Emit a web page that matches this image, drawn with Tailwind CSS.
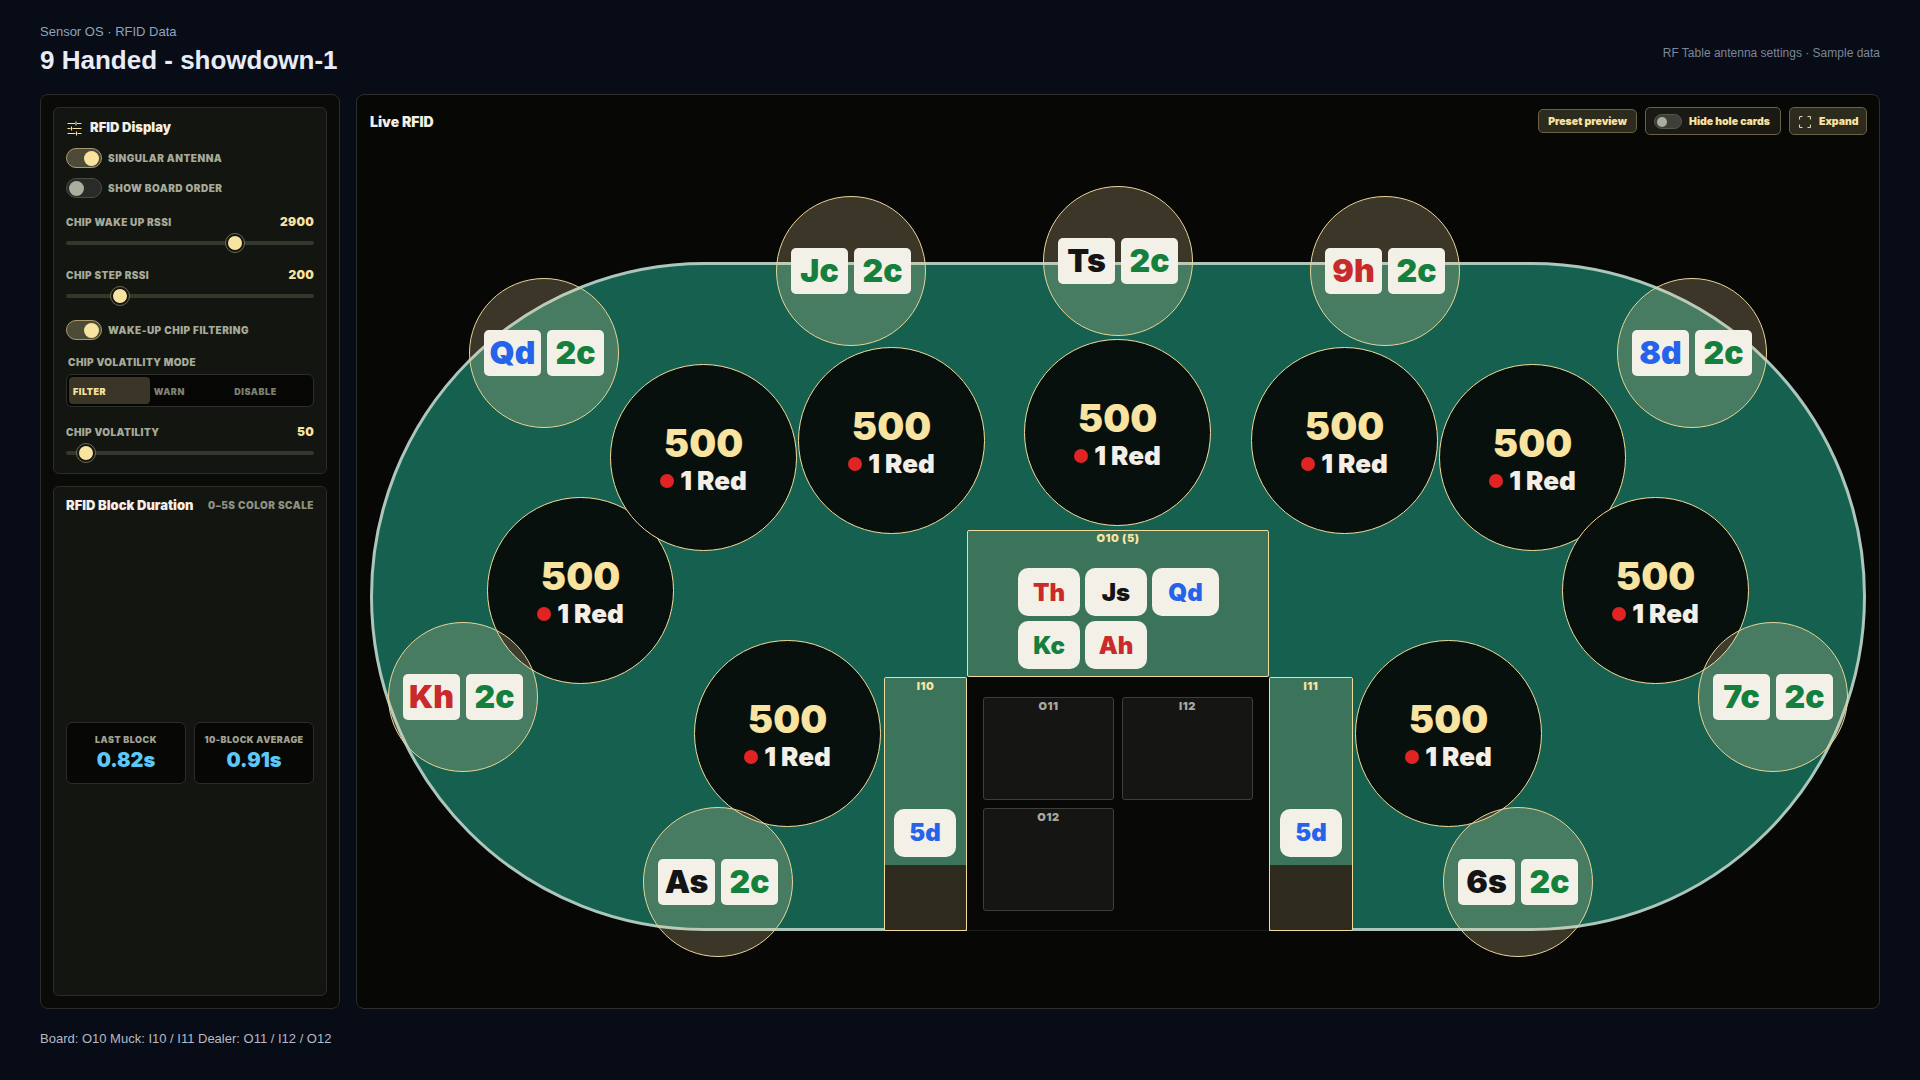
<!doctype html>
<html lang="en"><head><meta charset="utf-8"><title>RFID</title>
<script src="https://cdn.jsdelivr.net/npm/@tailwindcss/browser@4"></script></head>
<body class="bg-[#080c16] font-['Liberation_Sans',sans-serif] overflow-hidden">
<div class="w-[1920px] h-[1080px] flex flex-col px-[40px]">
  <header class="h-[94px] flex justify-between items-start">
    <div class="pt-[24px]">
      <div class="text-[13px] leading-[16px] text-[#8fa3bd]">Sensor OS · RFID Data</div>
      <h1 class="mt-[5px] text-[26px] leading-[30px] font-bold text-[#e8ecf6]">9 Handed - showdown-1</h1>
    </div>
    <div class="mt-[46px] text-[12px] leading-[14px] text-[#7b8698]">RF Table antenna settings · Sample data</div>
  </header>
  <main class="flex gap-[16px] h-[915px] font-['Inter',sans-serif]">
    <aside class="w-[300px] bg-[#0a0a08] border border-[#2c2b24] rounded-[8px] p-[12px] flex flex-col gap-[12px]">
      <section class="h-[367px] bg-[#131510] border border-[#2c2d25] rounded-[6px] px-[12px] pt-[11px]">
        <div class="flex items-center gap-[8px] h-[18px] pl-[1px]">
          <svg class="w-[15px] h-[15px] text-[#f8e3a1]" viewBox="0 0 15 15" fill="none" stroke="currentColor" stroke-width="1.1"><path d="M0.5 2.5H8M10 2.5H14.5M9 0.5V4.5M0.5 7.5H3.5M5.5 7.5H14.5M4.5 5.5V9.5M0.5 12.5H8.5M10.5 12.5H14.5M9.5 10.5V14.5"/></svg>
          <span class="text-[13px] font-black text-[#f3efe6]">RFID Display</span>
        </div>
        <div class="mt-[11px] flex items-center gap-[6px] h-[20px]">
          <span class="w-[36px] h-[20px] rounded-full bg-[#4e4a38] border border-[#a9986a] flex items-center justify-end pr-[2px]"><span class="w-[15px] h-[15px] rounded-full bg-[#f8e3a1]"></span></span>
          <span class="text-[10px] font-black tracking-[0.05em] text-[#a6aa99]">SINGULAR ANTENNA</span>
        </div>
        <div class="mt-[10px] flex items-center gap-[6px] h-[20px]">
          <span class="w-[36px] h-[20px] rounded-full bg-[#292b26] border border-[#4a4b45] flex items-center pl-[2px]"><span class="w-[15px] h-[15px] rounded-full bg-[#a9af9d]"></span></span>
          <span class="text-[10px] font-black tracking-[0.05em] text-[#a6aa99]">SHOW BOARD ORDER</span>
        </div>
        <div class="mt-[17px] flex justify-between items-center h-[14px] leading-none">
          <span class="text-[10px] font-black tracking-[0.04em] text-[#a6aa99]">CHIP WAKE UP RSSI</span>
          <span class="text-[12px] font-black tracking-[0.02em] text-[#f8e3a1]">2900</span>
        </div>
        <div class="relative mt-[12px] h-[4px] rounded-full bg-[#34372b]">
          <span class="absolute left-[160px] top-[-7px] w-[18px] h-[18px] rounded-full bg-[#f8e3a1] border-[#131510] border-[2px] outline outline-[#716a4e]"></span>
        </div>
        <div class="mt-[23px] flex justify-between items-center h-[14px] leading-none">
          <span class="text-[10px] font-black tracking-[0.04em] text-[#a6aa99]">CHIP STEP RSSI</span>
          <span class="text-[12px] font-black tracking-[0.02em] text-[#f8e3a1]">200</span>
        </div>
        <div class="relative mt-[12px] h-[4px] rounded-full bg-[#34372b]">
          <span class="absolute left-[45px] top-[-7px] w-[18px] h-[18px] rounded-full bg-[#f8e3a1] border-[#131510] border-[2px] outline outline-[#716a4e]"></span>
        </div>
        <div class="mt-[22px] flex items-center gap-[6px] h-[20px]">
          <span class="w-[36px] h-[20px] rounded-full bg-[#4e4a38] border border-[#a9986a] flex items-center justify-end pr-[2px]"><span class="w-[15px] h-[15px] rounded-full bg-[#f8e3a1]"></span></span>
          <span class="text-[10px] font-black tracking-[0.05em] text-[#a6aa99]">WAKE-UP CHIP FILTERING</span>
        </div>
        <div class="mt-[15px] ml-[2px] h-[14px] flex items-center text-[10px] font-black tracking-[0.04em] text-[#a6aa99]">CHIP VOLATILITY MODE</div>
        <div class="mt-[5px] h-[33px] bg-[#060605] border border-[#2f2f29] rounded-[6px] p-[2px] grid grid-cols-3 gap-0 text-[9px] font-black tracking-[0.06em] leading-none">
          <span class="bg-[#3a3527] rounded-[4px] text-[#f8e3a1] flex items-center pl-[4px] pt-[1px]">FILTER</span>
          <span class="text-[#7f8073] flex items-center pl-[4px] pt-[1px]">WARN</span>
          <span class="text-[#7f8073] flex items-center pl-[4px] pt-[1px]">DISABLE</span>
        </div>
        <div class="mt-[18px] flex justify-between items-center h-[14px] leading-none">
          <span class="text-[10px] font-black tracking-[0.04em] text-[#a6aa99]">CHIP VOLATILITY</span>
          <span class="text-[12px] font-black tracking-[0.02em] text-[#f8e3a1]">50</span>
        </div>
        <div class="relative mt-[12px] h-[4px] rounded-full bg-[#34372b]">
          <span class="absolute left-[11px] top-[-7px] w-[18px] h-[18px] rounded-full bg-[#f8e3a1] border-[#131510] border-[2px] outline outline-[#716a4e]"></span>
        </div>
      </section>
      <section class="h-[510px] bg-[#131510] border border-[#2c2d25] rounded-[6px] px-[12px] pt-[10px]">
        <div class="flex justify-between items-center h-[16px] leading-none">
          <span class="text-[13px] font-black text-[#f3efe6]">RFID Block Duration</span>
          <span class="text-[10px] font-black tracking-[0.05em] text-[#8e9182]">0–5S COLOR SCALE</span>
        </div>
        <div class="mt-[209px] grid grid-cols-2 gap-[8px]">
          <div class="h-[62px] bg-[#070705] border border-[#2c2c28] rounded-[6px] flex flex-col items-center pt-[12px] leading-none">
            <span class="text-[9px] font-black tracking-[0.05em] text-[#a0a292]">LAST BLOCK</span>
            <span class="mt-[6px] text-[20px] font-black text-[#5cc8fa]">0.82s</span>
          </div>
          <div class="h-[62px] bg-[#070705] border border-[#2c2c28] rounded-[6px] flex flex-col items-center pt-[12px] leading-none">
            <span class="text-[9px] font-black tracking-[0.05em] text-[#a0a292]">10-BLOCK AVERAGE</span>
            <span class="mt-[6px] text-[20px] font-black text-[#5cc8fa]">0.91s</span>
          </div>
        </div>
      </section>
    </aside>
    <section class="relative w-[1524px] bg-[#070706] border border-[#2e2d27] rounded-[8px]">
      <div class="absolute inset-x-0 top-0 h-[52px] flex items-center justify-between pl-[13px] pr-[12px] z-10">
        <span class="text-[14px] font-black text-[#f3efe6]">Live RFID</span>
        <div class="flex items-center gap-[8px] text-[10.5px] font-black text-[#f8e3a1]">
          <span class="h-[24px] w-[99px] rounded-[5px] bg-[#2d2a1e] border border-[#6a6245] flex items-center justify-center pt-[1px]">Preset preview</span>
          <span class="h-[28px] w-[136px] rounded-[5px] bg-[#1a1913] border border-[#6a6245] flex items-center pl-[8px] gap-[7px] pt-[1px]"><span class="w-[28px] h-[15px] rounded-full bg-[#3e3f38] border border-[#55564e] flex items-center pl-[2px]"><span class="w-[10px] h-[10px] rounded-full bg-[#a9af9d]"></span></span>Hide hole cards</span>
          <span class="h-[28px] w-[78px] rounded-[5px] bg-[#2d2a1e] border border-[#6a6245] flex items-center pl-[9px] gap-[8px] pt-[1px]"><svg class="w-[12px] h-[12px]" viewBox="0 0 12 12" fill="none" stroke="#d8d4b0" stroke-width="1.1"><path d="M0.5 3.5V1.5A1 1 0 0 1 1.5 .5H3.5M8.5 .5H10.5A1 1 0 0 1 11.5 1.5V3.5M11.5 8.5V10.5A1 1 0 0 1 10.5 11.5H8.5M3.5 11.5H1.5A1 1 0 0 1 .5 10.5V8.5"/></svg>Expand</span>
        </div>
      </div>
      <!-- table canvas -->
      <div class="absolute left-[13px] top-[167px] w-[1496px] h-[669px] bg-[#166050] border-[3px] border-[#acc6bb] rounded-[335px]"></div>

      <!-- chip stacks -->
      <div class="absolute left-[130px] top-[402px] w-[187px] h-[187px] pt-[2px] rounded-full bg-[#080d0a]/[.96] border border-[#f2dc9b] flex flex-col items-center justify-center"><span class="text-[38px] leading-[44px] font-black text-[#f8e3a1]">500</span><span class="flex items-center gap-[6px] text-[26px] leading-[32px] font-black text-[#f3efe6]"><i class="w-[14px] h-[14px] rounded-full bg-[#e02424]"></i>1 Red</span></div>
      <div class="absolute left-[253px] top-[269px] w-[187px] h-[187px] pt-[2px] rounded-full bg-[#080d0a]/[.96] border border-[#f2dc9b] flex flex-col items-center justify-center"><span class="text-[38px] leading-[44px] font-black text-[#f8e3a1]">500</span><span class="flex items-center gap-[6px] text-[26px] leading-[32px] font-black text-[#f3efe6]"><i class="w-[14px] h-[14px] rounded-full bg-[#e02424]"></i>1 Red</span></div>
      <div class="absolute left-[441px] top-[252px] w-[187px] h-[187px] pt-[2px] rounded-full bg-[#080d0a]/[.96] border border-[#f2dc9b] flex flex-col items-center justify-center"><span class="text-[38px] leading-[44px] font-black text-[#f8e3a1]">500</span><span class="flex items-center gap-[6px] text-[26px] leading-[32px] font-black text-[#f3efe6]"><i class="w-[14px] h-[14px] rounded-full bg-[#e02424]"></i>1 Red</span></div>
      <div class="absolute left-[667px] top-[244px] w-[187px] h-[187px] pt-[2px] rounded-full bg-[#080d0a]/[.96] border border-[#f2dc9b] flex flex-col items-center justify-center"><span class="text-[38px] leading-[44px] font-black text-[#f8e3a1]">500</span><span class="flex items-center gap-[6px] text-[26px] leading-[32px] font-black text-[#f3efe6]"><i class="w-[14px] h-[14px] rounded-full bg-[#e02424]"></i>1 Red</span></div>
      <div class="absolute left-[894px] top-[252px] w-[187px] h-[187px] pt-[2px] rounded-full bg-[#080d0a]/[.96] border border-[#f2dc9b] flex flex-col items-center justify-center"><span class="text-[38px] leading-[44px] font-black text-[#f8e3a1]">500</span><span class="flex items-center gap-[6px] text-[26px] leading-[32px] font-black text-[#f3efe6]"><i class="w-[14px] h-[14px] rounded-full bg-[#e02424]"></i>1 Red</span></div>
      <div class="absolute left-[1082px] top-[269px] w-[187px] h-[187px] pt-[2px] rounded-full bg-[#080d0a]/[.96] border border-[#f2dc9b] flex flex-col items-center justify-center"><span class="text-[38px] leading-[44px] font-black text-[#f8e3a1]">500</span><span class="flex items-center gap-[6px] text-[26px] leading-[32px] font-black text-[#f3efe6]"><i class="w-[14px] h-[14px] rounded-full bg-[#e02424]"></i>1 Red</span></div>
      <div class="absolute left-[1205px] top-[402px] w-[187px] h-[187px] pt-[2px] rounded-full bg-[#080d0a]/[.96] border border-[#f2dc9b] flex flex-col items-center justify-center"><span class="text-[38px] leading-[44px] font-black text-[#f8e3a1]">500</span><span class="flex items-center gap-[6px] text-[26px] leading-[32px] font-black text-[#f3efe6]"><i class="w-[14px] h-[14px] rounded-full bg-[#e02424]"></i>1 Red</span></div>
      <div class="absolute left-[337px] top-[545px] w-[187px] h-[187px] pt-[2px] rounded-full bg-[#080d0a]/[.96] border border-[#f2dc9b] flex flex-col items-center justify-center"><span class="text-[38px] leading-[44px] font-black text-[#f8e3a1]">500</span><span class="flex items-center gap-[6px] text-[26px] leading-[32px] font-black text-[#f3efe6]"><i class="w-[14px] h-[14px] rounded-full bg-[#e02424]"></i>1 Red</span></div>
      <div class="absolute left-[998px] top-[545px] w-[187px] h-[187px] pt-[2px] rounded-full bg-[#080d0a]/[.96] border border-[#f2dc9b] flex flex-col items-center justify-center"><span class="text-[38px] leading-[44px] font-black text-[#f8e3a1]">500</span><span class="flex items-center gap-[6px] text-[26px] leading-[32px] font-black text-[#f3efe6]"><i class="w-[14px] h-[14px] rounded-full bg-[#e02424]"></i>1 Red</span></div>

      <!-- board, muck, dealer -->
      <div class="absolute left-[610px] top-[435px] w-[302px] h-[147px] bg-[#3b745b] border border-[#f2dc9b] rounded-[2px]">
        <div class="text-center text-[11px] leading-[14px] font-black tracking-[0.05em] text-[#f8e3a1]">O10 (5)</div>
        <div class="mt-[23px] ml-[50px] flex flex-wrap gap-[5px] w-[210px] text-[24px] font-black">
          <span class="w-[62px] h-[48px] rounded-[10px] bg-[#f3f0e8] flex items-center justify-center pt-[2px] text-[#c92a2a]">Th</span>
          <span class="w-[62px] h-[48px] rounded-[10px] bg-[#f3f0e8] flex items-center justify-center pt-[2px] text-[#141414]">Js</span>
          <span class="w-[67px] h-[48px] rounded-[10px] bg-[#f3f0e8] flex items-center justify-center pt-[2px] text-[#2563eb]">Qd</span>
          <span class="w-[62px] h-[48px] rounded-[10px] bg-[#f3f0e8] flex items-center justify-center pt-[2px] text-[#15803d]">Kc</span>
          <span class="w-[62px] h-[48px] rounded-[10px] bg-[#f3f0e8] flex items-center justify-center pt-[2px] text-[#c92a2a]">Ah</span>
        </div>
      </div>
      <div class="absolute left-[527px] top-[582px] w-[83px] h-[254px] border border-[#f2dc9b] rounded-[2px] flex flex-col overflow-hidden">
        <div class="h-[187px] bg-[#3b745b] flex flex-col items-start">
          <span class="self-center text-[11px] leading-[14px] mt-[1px] font-black tracking-[0.05em] text-[#f8e3a1]">I10</span>
          <span class="mt-[116px] ml-[9px] w-[62px] h-[48px] rounded-[10px] bg-[#f3f0e8] flex items-center justify-center text-[24px] font-black text-[#2563eb]">5d</span>
        </div>
        <div class="flex-1 bg-[#2f2a1e]"></div>
      </div>
      <div class="absolute left-[610px] top-[582px] w-[302px] h-[254px] bg-[#080807] border-b border-[#1c1c18] pl-[16px] pt-[20px]">
        <div class="grid grid-cols-[131px_131px] grid-rows-[103px_103px] gap-x-[8px] gap-y-[8px]">
          <div class="bg-[#151514] border border-[#3e3e3c] rounded-[3px] text-center text-[11px] leading-[14px] pt-[1px] font-black tracking-[0.05em] text-[#a8a8a2]">O11</div>
          <div class="bg-[#151514] border border-[#3e3e3c] rounded-[3px] text-center text-[11px] leading-[14px] pt-[1px] font-black tracking-[0.05em] text-[#a8a8a2]">I12</div>
          <div class="bg-[#151514] border border-[#3e3e3c] rounded-[3px] text-center text-[11px] leading-[14px] pt-[1px] font-black tracking-[0.05em] text-[#a8a8a2]">O12</div>
        </div>
      </div>
      <div class="absolute left-[912px] top-[582px] w-[84px] h-[254px] border border-[#f2dc9b] rounded-[2px] flex flex-col overflow-hidden">
        <div class="h-[187px] bg-[#3b745b] flex flex-col items-center">
          <span class="text-[11px] leading-[14px] mt-[1px] font-black tracking-[0.05em] text-[#f8e3a1]">I11</span>
          <span class="mt-[116px] w-[62px] h-[48px] rounded-[10px] bg-[#f3f0e8] flex items-center justify-center text-[24px] font-black text-[#2563eb]">5d</span>
        </div>
        <div class="flex-1 bg-[#2f2a1e]"></div>
      </div>

      <!-- hole card antennas -->
      <div class="absolute left-[31px] top-[527px] w-[150px] h-[150px] rounded-full bg-[#f8e1a6]/[.22] border border-[#e8d596] flex items-center justify-center gap-[6px] text-[32px] font-black"><span class="w-[57px] h-[46px] rounded-[5px] bg-[#f3f0e8] flex items-center justify-center text-[#c92a2a]">Kh</span><span class="w-[57px] h-[46px] rounded-[5px] bg-[#f3f0e8] flex items-center justify-center text-[#15803d]">2c</span></div>
      <div class="absolute left-[112px] top-[183px] w-[150px] h-[150px] rounded-full bg-[#f8e1a6]/[.22] border border-[#e8d596] flex items-center justify-center gap-[6px] text-[32px] font-black"><span class="w-[57px] h-[46px] rounded-[5px] bg-[#f3f0e8] flex items-center justify-center text-[#2563eb]">Qd</span><span class="w-[57px] h-[46px] rounded-[5px] bg-[#f3f0e8] flex items-center justify-center text-[#15803d]">2c</span></div>
      <div class="absolute left-[419px] top-[101px] w-[150px] h-[150px] rounded-full bg-[#f8e1a6]/[.22] border border-[#e8d596] flex items-center justify-center gap-[6px] text-[32px] font-black"><span class="w-[57px] h-[46px] rounded-[5px] bg-[#f3f0e8] flex items-center justify-center text-[#15803d]">Jc</span><span class="w-[57px] h-[46px] rounded-[5px] bg-[#f3f0e8] flex items-center justify-center text-[#15803d]">2c</span></div>
      <div class="absolute left-[686px] top-[91px] w-[150px] h-[150px] rounded-full bg-[#f8e1a6]/[.22] border border-[#e8d596] flex items-center justify-center gap-[6px] text-[32px] font-black"><span class="w-[57px] h-[46px] rounded-[5px] bg-[#f3f0e8] flex items-center justify-center text-[#141414]">Ts</span><span class="w-[57px] h-[46px] rounded-[5px] bg-[#f3f0e8] flex items-center justify-center text-[#15803d]">2c</span></div>
      <div class="absolute left-[953px] top-[101px] w-[150px] h-[150px] rounded-full bg-[#f8e1a6]/[.22] border border-[#e8d596] flex items-center justify-center gap-[6px] text-[32px] font-black"><span class="w-[57px] h-[46px] rounded-[5px] bg-[#f3f0e8] flex items-center justify-center text-[#c92a2a]">9h</span><span class="w-[57px] h-[46px] rounded-[5px] bg-[#f3f0e8] flex items-center justify-center text-[#15803d]">2c</span></div>
      <div class="absolute left-[1260px] top-[183px] w-[150px] h-[150px] rounded-full bg-[#f8e1a6]/[.22] border border-[#e8d596] flex items-center justify-center gap-[6px] text-[32px] font-black"><span class="w-[57px] h-[46px] rounded-[5px] bg-[#f3f0e8] flex items-center justify-center text-[#2563eb]">8d</span><span class="w-[57px] h-[46px] rounded-[5px] bg-[#f3f0e8] flex items-center justify-center text-[#15803d]">2c</span></div>
      <div class="absolute left-[1341px] top-[527px] w-[150px] h-[150px] rounded-full bg-[#f8e1a6]/[.22] border border-[#e8d596] flex items-center justify-center gap-[6px] text-[32px] font-black"><span class="w-[57px] h-[46px] rounded-[5px] bg-[#f3f0e8] flex items-center justify-center text-[#15803d]">7c</span><span class="w-[57px] h-[46px] rounded-[5px] bg-[#f3f0e8] flex items-center justify-center text-[#15803d]">2c</span></div>
      <div class="absolute left-[286px] top-[712px] w-[150px] h-[150px] rounded-full bg-[#f8e1a6]/[.22] border border-[#e8d596] flex items-center justify-center gap-[6px] text-[32px] font-black"><span class="w-[57px] h-[46px] rounded-[5px] bg-[#f3f0e8] flex items-center justify-center text-[#141414]">As</span><span class="w-[57px] h-[46px] rounded-[5px] bg-[#f3f0e8] flex items-center justify-center text-[#15803d]">2c</span></div>
      <div class="absolute left-[1086px] top-[712px] w-[150px] h-[150px] rounded-full bg-[#f8e1a6]/[.22] border border-[#e8d596] flex items-center justify-center gap-[6px] text-[32px] font-black"><span class="w-[57px] h-[46px] rounded-[5px] bg-[#f3f0e8] flex items-center justify-center text-[#141414]">6s</span><span class="w-[57px] h-[46px] rounded-[5px] bg-[#f3f0e8] flex items-center justify-center text-[#15803d]">2c</span></div>
    </section>
  </main>
  <footer class="mt-[22px] text-[13px] leading-[16px] text-[#b5bac6]">Board: O10 Muck: I10 / I11 Dealer: O11 / I12 / O12</footer>
</div>
</body></html>
